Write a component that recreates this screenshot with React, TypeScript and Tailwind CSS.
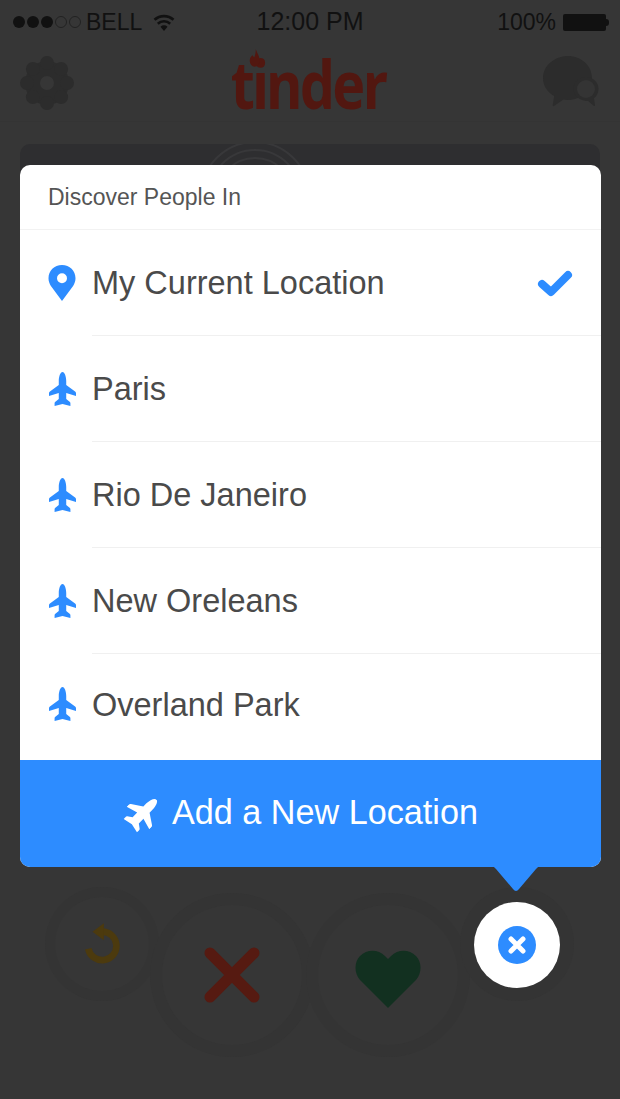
import React from 'react';

const locations = [
  { name: 'My Current Location', current: true },
  { name: 'Paris' },
  { name: 'Rio De Janeiro' },
  { name: 'New Oreleans' },
  { name: 'Overland Park' },
];

const PinIcon = () => (
  <svg width="28" height="36" viewBox="0 0 28 36">
    <path
      fillRule="evenodd"
      fill="#2d8cff"
      d="M14 0C6.300 0 .5 5.800 .5 13.300c0 3 1 5.300 2.400 7.700L14 36l11.100-15c1.400-2.400 2.400-4.700 2.400-7.700C27.500 5.800 21.700 0 14 0Zm0 8.300a5 5 0 1 1 0 10 5 5 0 0 1 0-10Z"
    />
  </svg>
);

const PlaneIcon = ({
  color = '#2d8cff',
  width = 27,
  height = 35,
  className = '',
}: {
  color?: string;
  width?: number;
  height?: number;
  className?: string;
}) => (
  <svg width={width} height={height} viewBox="0 0 29 35" preserveAspectRatio="none" className={className}>
    <path
      fill={color}
      d="M14.500 0C16.800 0 18.500 4.500 18.500 9V13L28 19.500C28.700 20 29 20.600 29 21.300V24L18.500 21V27L22.500 30C23 30.400 23 31 23 31.500V34L14.500 32L6 34V31.500C6 31 6 30.400 6.500 30L10.500 27V21L0 24V21.300C0 20.600 .3 20 1 19.500L10.500 13V9C10.500 4.500 12.200 0 14.500 0Z"
    />
  </svg>
);

const GearIcon = () => (
  <svg width="54" height="54" viewBox="0 0 54 54">
    <g fill="#2c2c2c">
      <path
        fillRule="evenodd"
        d="M27 5a22 22 0 1 0 0 44 22 22 0 0 0 0-44Zm0 15a7 7 0 1 1 0 14 7 7 0 0 1 0-14Z"
      />
      <circle cx="27" cy="7" r="7" />
      <circle cx="27" cy="47" r="7" />
      <circle cx="7" cy="27" r="7" />
      <circle cx="47" cy="27" r="7" />
      <circle cx="12.900" cy="12.900" r="7" />
      <circle cx="41.100" cy="12.900" r="7" />
      <circle cx="12.900" cy="41.100" r="7" />
      <circle cx="41.100" cy="41.100" r="7" />
    </g>
  </svg>
);

const ChatIcon = () => (
  <svg width="60" height="54" viewBox="0 0 60 54">
    <path fill="#2c2c2c" d="M26 0c13 0 24 9.500 24 22S39 44 26 44c-1.500 0-3 0-4.500-.4L12 50c-.8.500-1.500 0-1.300-.9l1.500-9.100C5 36 1 29.500 1 22 1 9.500 13 0 26 0Z" />
    <path fill="#2c2c2c" d="M44 21c7 0 12.500 5.200 12.500 12 0 3.800-1.700 7-4.500 9.300l1 7c.1.700-.5 1-1 .6l-6-5c-7.500.300-14.500-4.500-14.500-11.900C31.500 26.200 37 21 44 21Z" />
    <circle cx="44" cy="33" r="9" fill="#343434" />
  </svg>
);

const Ring = ({ size, inner, className = '', children }: { size: string; inner: string; className?: string; children: React.ReactNode }) => (
  <div className={`flex shrink-0 items-center justify-center rounded-full bg-[#343434] ${size} ${className}`}>
    <div className={`flex items-center justify-center rounded-full bg-[#363636] ${inner}`}>{children}</div>
  </div>
);

export default function App() {
  return (
    <div className="relative h-[1099px] w-[620px] overflow-hidden bg-[#363636] font-['Liberation_Sans',Arial,sans-serif]">
      {/* status bar */}
      <div className="flex h-11 items-center justify-between pl-[13px] pr-[11px] text-[23px] text-[#111]">
        <div className="flex w-[190px] items-center">
          <div className="flex items-center gap-[2px]">
            <span className="h-[12px] w-[12px] rounded-full bg-[#111]" />
            <span className="h-[12px] w-[12px] rounded-full bg-[#111]" />
            <span className="h-[12px] w-[12px] rounded-full bg-[#111]" />
            <span className="h-[12px] w-[12px] rounded-full border border-[#222]" />
            <span className="h-[12px] w-[12px] rounded-full border border-[#222]" />
          </div>
          <span className="ml-[5px]">BELL</span>
          <svg width="24" height="20" viewBox="0 0 24 20" className="ml-[10px]">
            <path d="M12 19 8.500 14.800a5 5 0 0 1 7 0Z" fill="#111" />
            <path d="M5.800 11.700a9 9 0 0 1 12.400 0M2.500 7.800a14 14 0 0 1 19 0" fill="none" stroke="#111" strokeWidth="2.600" />
          </svg>
        </div>
        <span className="ml-[-2px] text-[25px]">12:00 PM</span>
        <div className="flex w-[190px] items-center justify-end">
          <span>100%</span>
          <div className="ml-[7px] h-[17px] w-[43px] rounded-[2px] bg-[#111]" />
          <div className="h-[7px] w-[3px] rounded-r-sm bg-[#111]" />
        </div>
      </div>

      {/* nav */}
      <div className="flex h-[78px] items-center justify-between border-b border-[#343434] pl-5 pr-[18px]">
        <GearIcon />
        <div className="relative ml-[-1px] scale-x-[0.84] font-['Noto_Sans',sans-serif] text-[66px] font-bold leading-none tracking-[-3px] text-[#521710]">
          tinder
          <svg width="16" height="20" viewBox="0 0 14 22" className="absolute left-[21px] top-[-1px]">
            <path fill="#521710" d="M8 0c1 4 5 7 5 13a6.500 6.500 0 0 1-13 0c0-3 2-5 4-6 .5 1 1 2 2 2 1-2 2-5 2-9Z" />
          </svg>
        </div>
        <ChatIcon />
      </div>

      {/* card behind the modal */}
      <div className="mx-5 mt-[22px] h-[700px] overflow-hidden rounded-t-[10px] bg-[#2e2e30]">
        <svg width="580" height="30" viewBox="0 0 580 30">
          <g fill="none" stroke="#38383a" strokeWidth="2">
            <circle cx="235" cy="52" r="22" />
            <circle cx="235" cy="52" r="30" />
            <circle cx="235" cy="52" r="38" />
            <circle cx="235" cy="52" r="46" />
            <circle cx="235" cy="52" r="54" />
          </g>
        </svg>
      </div>

      {/* actions */}
      <div className="mt-[19px] flex items-start pl-[45px]">
        <Ring size="h-[114px] w-[114px]" inner="h-[94px] w-[94px]" className="mt-[24px]">
          <svg width="36" height="42" viewBox="0 0 38 44">
            <path d="M19 7a15 15 0 1 1-14.500 18" fill="none" stroke="#4c3a0e" strokeWidth="7" transform="translate(0 2)" />
            <path d="M21 0v18L9 9Z" fill="#4c3a0e" />
          </svg>
        </Ring>
        <Ring size="h-[164px] w-[164px]" inner="h-[140px] w-[140px]" className="ml-[-9px] mt-[30px]">
          <svg width="56" height="56" viewBox="0 0 56 56">
            <path d="M6 6 50 50M50 6 6 50" stroke="#561a11" strokeWidth="11" strokeLinecap="round" />
          </svg>
        </Ring>
        <Ring size="h-[164px] w-[164px]" inner="h-[140px] w-[140px]" className="ml-[-8px] mt-[30px]">
          <svg width="66" height="58" viewBox="0 0 66 58" className="mt-2">
            <path fill="#123020" d="M33 58 5 30C-1 23-1 12 5 6c7-7 18-7 25 0l3 3 3-3c7-7 18-7 25 0 6 6 6 17 0 24Z" />
          </svg>
        </Ring>
        <div className="ml-[-10px] mt-[24px] h-[114px] w-[114px] shrink-0 rounded-full bg-[#343434]" />
      </div>

      {/* modal */}
      <div className="absolute left-5 top-[165px] w-[581px]">
        <div className="overflow-hidden rounded-[10px] bg-white">
          <div className="flex h-[65px] items-center border-b border-[#f2f2f2] pl-7 text-[23px] text-[#555]">
            Discover People In
          </div>
          {locations.map((loc, i) => (
            <div key={loc.name} className={`flex h-[106px] items-center pl-[28px] ${i === locations.length - 1 ? 'pb-[6px]' : ''}`}>
              <div className="flex w-[44px] shrink-0 justify-start">
                {loc.current ? <PinIcon /> : <PlaneIcon className="ml-[1px]" />}
              </div>
              <div
                className={`flex h-full flex-1 items-center justify-between pr-7 pt-[2px] text-[32.500px] text-[#4a4a4a] ${
                  i < locations.length - 1 ? 'border-b border-[#f0f0f0]' : ''
                }`}
              >
                {loc.name}
                {loc.current && (
                  <svg width="36" height="28" viewBox="0 0 36 28">
                    <path d="M5 14 14 22 31 5" fill="none" stroke="#2d8cff" strokeWidth="8" strokeLinecap="round" strokeLinejoin="round" />
                  </svg>
                )}
              </div>
            </div>
          ))}
          <div className="flex h-[107px] items-center justify-center gap-[13px] bg-[#2d8cff] pb-[2px] pr-[16px] text-[34.200px] text-white">
            <PlaneIcon color="#fff" width={32} height={38} className="rotate-45" />
            Add a New Location
          </div>
        </div>
        <svg width="56" height="28" viewBox="0 0 56 28" className="absolute bottom-[-26px] left-[468px]">
          <path d="M0 0h56c-4 0-6 2-8 4L31 24c-2 2.500-4 2.500-6 0L8 4C6 2 4 0 0 0Z" fill="#2d8cff" />
        </svg>
      </div>

      {/* close button sitting over the last ring */}
      <div className="absolute left-[474px] top-[902px] flex h-[86px] w-[86px] items-center justify-center rounded-full bg-white">
        <svg width="40" height="40" viewBox="0 0 40 40">
          <circle cx="20" cy="20" r="19" fill="#2d8cff" />
          <path d="M14 14 26 26M26 14 14 26" stroke="#fff" strokeWidth="5" strokeLinecap="round" />
        </svg>
      </div>
    </div>
  );
}
